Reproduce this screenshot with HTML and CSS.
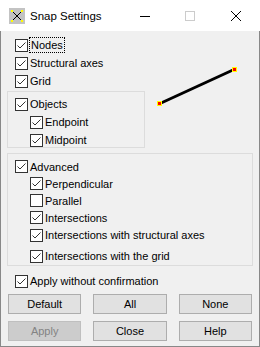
FILE: index.html
```html
<!DOCTYPE html>
<html lang="en">

<head>
  <meta charset="UTF-8" />
  <title>Snap Settings</title>
  <link rel="stylesheet" href="styles.css">
</head>

<body>
  <div class="window">
    <!-- title bar -->
    <div class="titlebar">
      <svg class="appicon" width="16" height="16" viewBox="0 0 16 16">
        <rect x="0" y="0" width="16" height="16" fill="#c3c3c3" />
        <path d="M3 3 L13 13 M13 3 L3 13" stroke="#000" stroke-width="1" />
        <rect x="2" y="2" width="2" height="2" fill="#ffff00" />
        <rect x="12" y="2" width="2" height="2" fill="#ffff00" />
        <rect x="2" y="12" width="2" height="2" fill="#ffff00" />
        <rect x="12" y="12" width="2" height="2" fill="#ffff00" />
      </svg>
      <span class="title">Snap Settings</span>
      <div class="caption-btns">
        <svg class="min" width="10" height="10" viewBox="0 0 10 10"><path d="M0 5.5 H10" stroke="#000" /></svg>
        <svg class="max" width="10" height="10" viewBox="0 0 10 10"><rect x="0.5" y="0.5" width="9" height="9" fill="none" stroke="#cccccc" /></svg>
        <svg class="close" width="10" height="10" viewBox="0 0 10 10"><path d="M0 0 L10 10 M10 0 L0 10" stroke="#000" /></svg>
      </div>
    </div>

    <div class="body">
      <div class="top">
        <div class="left">
          <label class="row"><span class="box on"></span><span class="focus">Nodes</span></label>
          <label class="row"><span class="box on"></span>Structural axes</label>
          <label class="row"><span class="box on"></span>Grid</label>
          <div class="group objects">
            <label class="row"><span class="box on"></span>Objects</label>
            <label class="row sub"><span class="box on"></span>Endpoint</label>
            <label class="row sub"><span class="box on"></span>Midpoint</label>
          </div>
        </div>
        <!-- preview of the snapped line -->
        <svg class="preview" width="107" height="112" viewBox="0 0 107 112">
          <path d="M15 67.5 L89 33.5" stroke="#000" stroke-width="3" />
          <rect x="12.5" y="65.5" width="4" height="4" fill="#ff0000" stroke="#ffff00" />
          <rect x="87.5" y="31.5" width="4" height="4" fill="#ff0000" stroke="#ffff00" />
        </svg>
      </div>

      <div class="group advanced">
        <label class="row"><span class="box on"></span>Advanced</label>
        <label class="row sub"><span class="box on"></span>Perpendicular</label>
        <label class="row sub"><span class="box"></span>Parallel</label>
        <label class="row sub"><span class="box on"></span>Intersections</label>
        <label class="row sub tall"><span class="box on"></span>Intersections with structural axes</label>
        <label class="row sub tall last"><span class="box on"></span>Intersections with the grid</label>
      </div>

      <label class="row apply-row"><span class="box on"></span>Apply without confirmation</label>

      <div class="buttons">
        <button>Default</button>
        <button>All</button>
        <button>None</button>
        <button disabled>Apply</button>
        <button>Close</button>
        <button>Help</button>
      </div>
    </div>
  </div>
</body>

</html>
```
FILE: styles.css
```css
* {
  margin: 0;
  padding: 0;
  box-sizing: border-box;
}

body {
  background: #fff;
  font: 11px "Liberation Sans", Arial, sans-serif;
  color: #000;
}

.window {
  width: 260px;
  height: 347px;
  display: flex;
  flex-direction: column;
}

.titlebar {
  flex: none;
  height: 31px;
  background: #fff;
  display: flex;
  align-items: center;
  padding-left: 9px;
}

.titlebar .title {
  font-size: 11.5px;
  margin-left: 5px;
}

.caption-btns {
  margin-left: auto;
  display: flex;
  padding-right: 19px;
}

.caption-btns .max {
  margin-left: 35px;
}

.caption-btns .close {
  margin-left: 36px;
}

.body {
  flex: 1;
  min-height: 0;
  background: #f0f0f0;
  border: 1px solid #888;
  border-top: none;
  padding: 5px 6px 4px 6px;
}

.top {
  display: flex;
}

.left {
  width: 138px;
}

.row {
  display: flex;
  align-items: center;
  height: 18px;
  padding-left: 8px;
  white-space: nowrap;
}

.row.sub {
  padding-left: 23px;
}

.box {
  width: 13px;
  height: 13px;
  border: 1px solid #333;
  background: #fff;
  margin-right: 2px;
  flex: none;
}

.box.on {
  background: #fff url("data:image/svg+xml,%3Csvg xmlns='http://www.w3.org/2000/svg' width='11' height='11'%3E%3Cpath d='M1.5 5.5 L4 8 L9.5 2.5' fill='none' stroke='%23333' stroke-width='1'/%3E%3C/svg%3E") no-repeat center;
}

.focus {
  outline: 1px dotted #000;
  padding: 0 1px;
  line-height: 14px;
}

.group {
  border: 1px solid #dcdcdc;
}

.objects {
  margin-top: 1px;
  padding-top: 3px;
}

.objects .row:last-child {
  margin-bottom: -2px;
}

.group .row {
  padding-left: 7px;
}

.group .row.sub {
  padding-left: 22px;
}

.advanced {
  margin-top: 5px;
  padding-top: 4px;
}

.advanced .row {
  height: 17px;
}

.advanced .row.tall {
  height: 18px;
}

.advanced .row.last {
  margin-top: 3px;
}

.apply-row {
  margin-top: 6px;
}

.buttons {
  display: grid;
  grid-template-columns: repeat(3, 1fr);
  gap: 7px 12px;
  margin-top: 4px;
  padding: 0 1px;
}

.buttons button {
  height: 20px;
  background: #e1e1e1;
  border: 1px solid #adadad;
  font: 11px "Liberation Sans", Arial, sans-serif;
  color: #000;
}

.buttons button:disabled {
  background: #cccccc;
  border-color: #bfbfbf;
  color: #838383;
}
```
